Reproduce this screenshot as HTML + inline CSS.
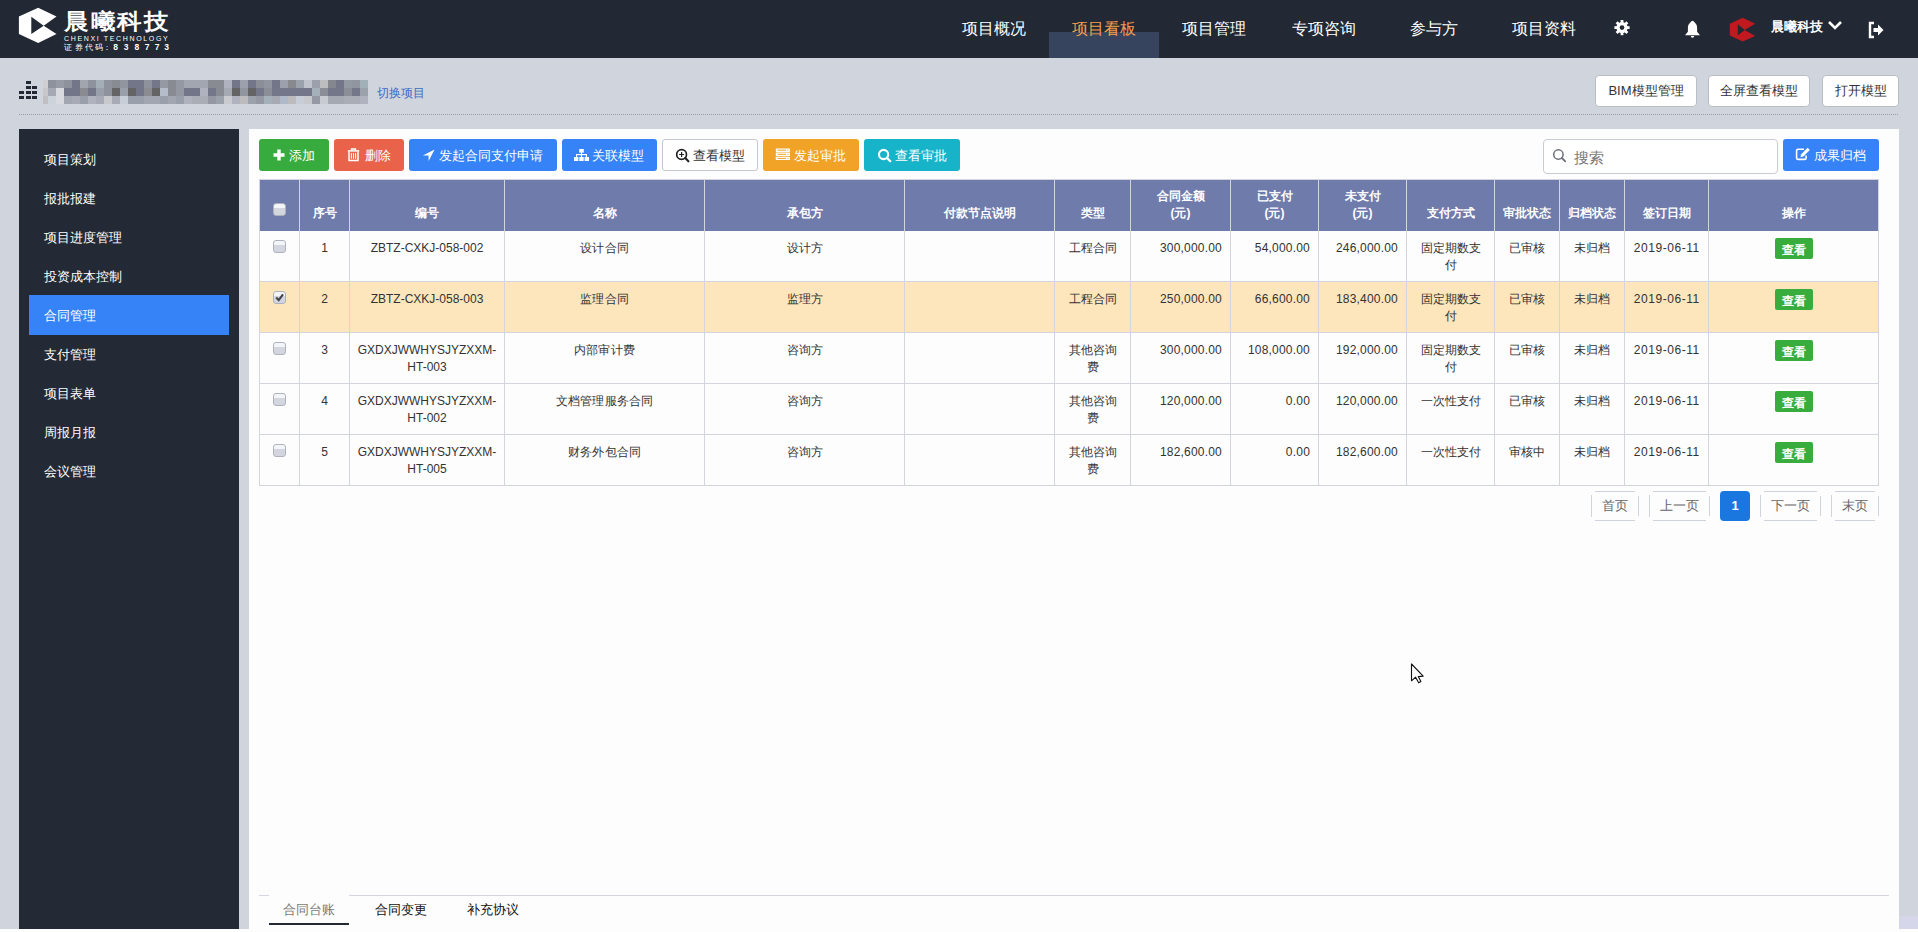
<!DOCTYPE html>
<html><head><meta charset="utf-8">
<style>
*{margin:0;padding:0;box-sizing:border-box}
html,body{width:1918px;height:932px;overflow:hidden;background:#fdfdfd;font-family:"Liberation Sans",sans-serif;color:#333}
.abs{position:absolute}
#hdr{left:0;top:0;width:1918px;height:58px;background:#222834}
#bg{left:0;top:58px;width:1918px;height:871px;background:#d0d4dd}
.nav{top:20px;height:18px;line-height:18px;font-size:16px;color:#fff;white-space:nowrap}
#side{left:19px;top:129px;width:220px;height:800px;background:#232a35}
.mi{left:25px;width:200px;height:20px;line-height:20px;font-size:13px;color:#fff;white-space:nowrap}
#panel{left:249px;top:129px;width:1650px;height:800px;background:#fdfdfd}
.btn{position:absolute;top:139px;height:32px;border-radius:3px;color:#fff;font-size:13px;line-height:32px;text-align:center;white-space:nowrap}
.tbtn{position:absolute;top:75px;height:32px;border-radius:4px;background:#fff;border:1px solid #b9bdc5;font-size:13px;line-height:30px;text-align:center;color:#333;white-space:nowrap}
.vl{position:absolute;width:1px;background:#d2d5de}
.hl{position:absolute;height:1px;background:#d2d5de}
.cell{position:absolute;font-size:12px;line-height:17px;text-align:center;color:#333}
.hc{position:absolute;font-size:12px;line-height:17px;text-align:center;color:#fff;font-weight:bold}
.cb{position:absolute;width:13px;height:13px;border:1px solid #aeb2bc;border-radius:3px;background:linear-gradient(#f4f5f8 0,#f4f5f8 35%,#d3d6de 36%,#d3d6de 100%)}
.view{position:absolute;left:1775px;width:38px;height:21px;background:#38ad3e;border-radius:2px;color:#fff;font-size:12px;line-height:24px;text-align:center;font-weight:bold}
.bt{top:148px;font-size:13px;line-height:16px;color:#fff;white-space:nowrap}
.pg{position:absolute;top:491px;height:30px;border:1px solid #d5d8df;border-radius:4px;font-size:13px;line-height:28px;text-align:center;color:#666;background:#fdfdfd}
</style></head><body>
<div id="hdr" class="abs"></div>
<div id="bg" class="abs"></div>

<!-- logo -->
<svg class="abs" style="left:0;top:0" width="180" height="58" viewBox="0 0 180 58">
  <path d="M38.2 7.8 L56.5 16.4 L43.7 25.7 L56.5 34.1 L38.2 43 L18.9 34.1 L18.9 16.4 Z M31.3 16.8 L31.3 34.1 L43.7 25.7 Z" fill="#fff" fill-rule="evenodd"/>
</svg>
<div class="abs" style="left:64px;top:9.5px;font-size:24px;line-height:26px;color:#fff;letter-spacing:2.5px;white-space:nowrap;transform:scaleY(0.9);transform-origin:0 0;font-weight:bold">晨曦科技</div>
<div class="abs" style="left:64px;top:35px;font-size:7px;line-height:7px;color:#fff;letter-spacing:1.65px;white-space:nowrap">CHENXI TECHNOLOGY</div>
<div class="abs" style="left:62.1px;top:43px;width:12px;text-align:center;font-size:7.5px;line-height:9px;color:#fff">证</div>
<div class="abs" style="left:72.7px;top:43px;width:12px;text-align:center;font-size:7.5px;line-height:9px;color:#fff">券</div>
<div class="abs" style="left:83.1px;top:43px;width:12px;text-align:center;font-size:7.5px;line-height:9px;color:#fff">代</div>
<div class="abs" style="left:93.3px;top:43px;width:12px;text-align:center;font-size:7.5px;line-height:9px;color:#fff">码</div>
<div class="abs" style="left:101.3px;top:43px;width:12px;text-align:center;font-size:7.5px;line-height:9px;color:#fff">：</div>
<div class="abs" style="left:109.5px;top:43px;width:12px;text-align:center;font-size:8.5px;line-height:9px;color:#fff;font-weight:bold">8</div>
<div class="abs" style="left:120.1px;top:43px;width:12px;text-align:center;font-size:8.5px;line-height:9px;color:#fff;font-weight:bold">3</div>
<div class="abs" style="left:130.8px;top:43px;width:12px;text-align:center;font-size:8.5px;line-height:9px;color:#fff;font-weight:bold">8</div>
<div class="abs" style="left:141.0px;top:43px;width:12px;text-align:center;font-size:8.5px;line-height:9px;color:#fff;font-weight:bold">7</div>
<div class="abs" style="left:151.2px;top:43px;width:12px;text-align:center;font-size:8.5px;line-height:9px;color:#fff;font-weight:bold">7</div>
<div class="abs" style="left:160.5px;top:43px;width:12px;text-align:center;font-size:8.5px;line-height:9px;color:#fff;font-weight:bold">3</div>
<!-- nav -->
<div class="abs" style="left:1049px;top:32px;width:110px;height:26px;background:#36445e"></div>
<div class="abs nav" style="left:962px">项目概况</div>
<div class="abs nav" style="left:1072px;color:#f39b4f">项目看板</div>
<div class="abs nav" style="left:1182px">项目管理</div>
<div class="abs nav" style="left:1292px">专项咨询</div>
<div class="abs nav" style="left:1410px">参与方</div>
<div class="abs nav" style="left:1512px">项目资料</div>

<!-- top icons -->
<svg class="abs" style="left:1612px;top:18px" width="20" height="20" viewBox="0 0 20 20"><g fill="#fff"><circle cx="10" cy="9.6" r="5.6"/><g><rect x="8.6" y="2" width="2.8" height="15.2"/><rect x="8.6" y="2" width="2.8" height="15.2" transform="rotate(45 10 9.6)"/><rect x="8.6" y="2" width="2.8" height="15.2" transform="rotate(90 10 9.6)"/><rect x="8.6" y="2" width="2.8" height="15.2" transform="rotate(135 10 9.6)"/></g></g><circle cx="10" cy="9.6" r="2.3" fill="#222834"/></svg>
<svg class="abs" style="left:1684px;top:20px" width="17" height="19" viewBox="0 0 17 19"><path d="M8.5 0.8C7.6 0.8 6.9 2 5.6 3.2C4.4 4.4 3.9 6 3.9 8L3.9 11.8L1 15.2L16 15.2L13.1 11.8L13.1 8C13.1 6 12.6 4.4 11.4 3.2C10.1 2 9.4 0.8 8.5 0.8Z" fill="#fff"/><path d="M6.8 16A1.7 1.7 0 0 0 10.2 16Z" fill="#fff"/></svg>
<svg class="abs" style="left:1728px;top:16px" width="30" height="27" viewBox="0 0 30 27"><path d="M14.7 1.8L27.2 7.7L16.6 14L27.2 20L14.7 25.6L1.8 19.5L1.8 7.7Z M9.8 8.2L9.8 19.2L16.9 14Z" fill="#c0191f" fill-rule="evenodd"/></svg>
<div class="abs" style="left:1771px;top:19px;font-size:13px;line-height:16px;color:#fff;font-weight:bold;white-space:nowrap">晨曦科技</div>
<svg class="abs" style="left:1827px;top:20px" width="16" height="11" viewBox="0 0 16 11"><path d="M2 2 L8 8 L14 2" stroke="#fff" stroke-width="2.6" fill="none"/></svg>
<svg class="abs" style="left:1867px;top:21px" width="18" height="18" viewBox="0 0 18 18"><path d="M7 2 L3 2 L3 16 L7 16" stroke="#fff" stroke-width="2.4" fill="none"/><path d="M6.5 7 L11 7 L11 3.5 L16.5 9 L11 14.5 L11 11 L6.5 11 Z" fill="#fff"/></svg>

<!-- project bar -->
<svg class="abs" style="left:19px;top:81px" width="19" height="19" viewBox="0 0 19 19">
<g fill="#222834"><rect x="7" y="0" width="5" height="3"/><rect x="7" y="5" width="5" height="3"/><rect x="13" y="5" width="5" height="3"/><rect x="0" y="10" width="5" height="3"/><rect x="7" y="10" width="5" height="3"/><rect x="13" y="10" width="5" height="3"/><rect x="0" y="15" width="5" height="3"/><rect x="7" y="15" width="5" height="3"/><rect x="13" y="15" width="5" height="3"/></g></svg>
<div class="abs" style="left:43px;top:80px;width:5px;height:8px;background:#cfcfd1"></div>
<div class="abs" style="left:48px;top:80px;width:8px;height:8px;background:#8e929d"></div>
<div class="abs" style="left:56px;top:80px;width:8px;height:8px;background:#969ba5"></div>
<div class="abs" style="left:64px;top:80px;width:8px;height:8px;background:#8e929d"></div>
<div class="abs" style="left:72px;top:80px;width:8px;height:8px;background:#727688"></div>
<div class="abs" style="left:80px;top:80px;width:8px;height:8px;background:#a0a5ae"></div>
<div class="abs" style="left:88px;top:80px;width:8px;height:8px;background:#8e929d"></div>
<div class="abs" style="left:96px;top:80px;width:8px;height:8px;background:#a4aeb7"></div>
<div class="abs" style="left:104px;top:80px;width:8px;height:8px;background:#8e929d"></div>
<div class="abs" style="left:112px;top:80px;width:8px;height:8px;background:#898b93"></div>
<div class="abs" style="left:120px;top:80px;width:8px;height:8px;background:#9095a0"></div>
<div class="abs" style="left:128px;top:80px;width:8px;height:8px;background:#727688"></div>
<div class="abs" style="left:136px;top:80px;width:8px;height:8px;background:#727688"></div>
<div class="abs" style="left:144px;top:80px;width:8px;height:8px;background:#8e929d"></div>
<div class="abs" style="left:152px;top:80px;width:8px;height:8px;background:#737789"></div>
<div class="abs" style="left:160px;top:80px;width:8px;height:8px;background:#9599a3"></div>
<div class="abs" style="left:168px;top:80px;width:8px;height:8px;background:#898b93"></div>
<div class="abs" style="left:176px;top:80px;width:8px;height:8px;background:#9398a2"></div>
<div class="abs" style="left:184px;top:80px;width:8px;height:8px;background:#a2a6b0"></div>
<div class="abs" style="left:192px;top:80px;width:8px;height:8px;background:#a2a6b0"></div>
<div class="abs" style="left:200px;top:80px;width:8px;height:8px;background:#a2a6b0"></div>
<div class="abs" style="left:208px;top:80px;width:8px;height:8px;background:#898b93"></div>
<div class="abs" style="left:216px;top:80px;width:8px;height:8px;background:#898b93"></div>
<div class="abs" style="left:224px;top:80px;width:8px;height:8px;background:#b0b3bf"></div>
<div class="abs" style="left:232px;top:80px;width:8px;height:8px;background:#727688"></div>
<div class="abs" style="left:240px;top:80px;width:8px;height:8px;background:#9ca0ac"></div>
<div class="abs" style="left:248px;top:80px;width:8px;height:8px;background:#727688"></div>
<div class="abs" style="left:256px;top:80px;width:8px;height:8px;background:#8b8e96"></div>
<div class="abs" style="left:264px;top:80px;width:8px;height:8px;background:#9095a0"></div>
<div class="abs" style="left:272px;top:80px;width:8px;height:8px;background:#727688"></div>
<div class="abs" style="left:280px;top:80px;width:8px;height:8px;background:#9ca0ac"></div>
<div class="abs" style="left:288px;top:80px;width:8px;height:8px;background:#88898f"></div>
<div class="abs" style="left:296px;top:80px;width:8px;height:8px;background:#9ca2ac"></div>
<div class="abs" style="left:304px;top:80px;width:8px;height:8px;background:#c0c3cb"></div>
<div class="abs" style="left:312px;top:80px;width:8px;height:8px;background:#9ca0ac"></div>
<div class="abs" style="left:320px;top:80px;width:8px;height:8px;background:#bdbdbf"></div>
<div class="abs" style="left:328px;top:80px;width:8px;height:8px;background:#85878e"></div>
<div class="abs" style="left:336px;top:80px;width:8px;height:8px;background:#727688"></div>
<div class="abs" style="left:344px;top:80px;width:8px;height:8px;background:#9399a3"></div>
<div class="abs" style="left:352px;top:80px;width:8px;height:8px;background:#9095a0"></div>
<div class="abs" style="left:360px;top:80px;width:8px;height:8px;background:#a2b0b8"></div>
<div class="abs" style="left:43px;top:88px;width:5px;height:8px;background:#c8c8ca"></div>
<div class="abs" style="left:48px;top:88px;width:8px;height:8px;background:#a5a9b3"></div>
<div class="abs" style="left:56px;top:88px;width:8px;height:8px;background:#d8dae0"></div>
<div class="abs" style="left:64px;top:88px;width:8px;height:8px;background:#727688"></div>
<div class="abs" style="left:72px;top:88px;width:8px;height:8px;background:#727688"></div>
<div class="abs" style="left:80px;top:88px;width:8px;height:8px;background:#898b91"></div>
<div class="abs" style="left:88px;top:88px;width:8px;height:8px;background:#727688"></div>
<div class="abs" style="left:96px;top:88px;width:8px;height:8px;background:#9aa0ab"></div>
<div class="abs" style="left:104px;top:88px;width:8px;height:8px;background:#8e929d"></div>
<div class="abs" style="left:112px;top:88px;width:8px;height:8px;background:#646464"></div>
<div class="abs" style="left:120px;top:88px;width:8px;height:8px;background:#9aa0ab"></div>
<div class="abs" style="left:128px;top:88px;width:8px;height:8px;background:#646464"></div>
<div class="abs" style="left:136px;top:88px;width:8px;height:8px;background:#727688"></div>
<div class="abs" style="left:144px;top:88px;width:8px;height:8px;background:#8b8c92"></div>
<div class="abs" style="left:152px;top:88px;width:8px;height:8px;background:#646464"></div>
<div class="abs" style="left:160px;top:88px;width:8px;height:8px;background:#b4bdc9"></div>
<div class="abs" style="left:168px;top:88px;width:8px;height:8px;background:#898b93"></div>
<div class="abs" style="left:176px;top:88px;width:8px;height:8px;background:#9398a2"></div>
<div class="abs" style="left:184px;top:88px;width:8px;height:8px;background:#727688"></div>
<div class="abs" style="left:192px;top:88px;width:8px;height:8px;background:#727688"></div>
<div class="abs" style="left:200px;top:88px;width:8px;height:8px;background:#b0b3bf"></div>
<div class="abs" style="left:208px;top:88px;width:8px;height:8px;background:#737789"></div>
<div class="abs" style="left:216px;top:88px;width:8px;height:8px;background:#898b93"></div>
<div class="abs" style="left:224px;top:88px;width:8px;height:8px;background:#a4a9b2"></div>
<div class="abs" style="left:232px;top:88px;width:8px;height:8px;background:#646464"></div>
<div class="abs" style="left:240px;top:88px;width:8px;height:8px;background:#9095a0"></div>
<div class="abs" style="left:248px;top:88px;width:8px;height:8px;background:#646464"></div>
<div class="abs" style="left:256px;top:88px;width:8px;height:8px;background:#737789"></div>
<div class="abs" style="left:264px;top:88px;width:8px;height:8px;background:#8b8e96"></div>
<div class="abs" style="left:272px;top:88px;width:8px;height:8px;background:#737789"></div>
<div class="abs" style="left:280px;top:88px;width:8px;height:8px;background:#737789"></div>
<div class="abs" style="left:288px;top:88px;width:8px;height:8px;background:#737789"></div>
<div class="abs" style="left:296px;top:88px;width:8px;height:8px;background:#737789"></div>
<div class="abs" style="left:304px;top:88px;width:8px;height:8px;background:#737789"></div>
<div class="abs" style="left:312px;top:88px;width:8px;height:8px;background:#a4b0ba"></div>
<div class="abs" style="left:320px;top:88px;width:8px;height:8px;background:#8b8e96"></div>
<div class="abs" style="left:328px;top:88px;width:8px;height:8px;background:#737789"></div>
<div class="abs" style="left:336px;top:88px;width:8px;height:8px;background:#737789"></div>
<div class="abs" style="left:344px;top:88px;width:8px;height:8px;background:#8b8e96"></div>
<div class="abs" style="left:352px;top:88px;width:8px;height:8px;background:#737789"></div>
<div class="abs" style="left:360px;top:88px;width:8px;height:8px;background:#9ca2ac"></div>
<div class="abs" style="left:43px;top:96px;width:5px;height:8px;background:#c0c0c2"></div>
<div class="abs" style="left:48px;top:96px;width:8px;height:8px;background:#ccd3db"></div>
<div class="abs" style="left:56px;top:96px;width:8px;height:8px;background:#d8dae0"></div>
<div class="abs" style="left:64px;top:96px;width:8px;height:8px;background:#a2a6b0"></div>
<div class="abs" style="left:72px;top:96px;width:8px;height:8px;background:#a8abb5"></div>
<div class="abs" style="left:80px;top:96px;width:8px;height:8px;background:#9aa0ab"></div>
<div class="abs" style="left:88px;top:96px;width:8px;height:8px;background:#b0b3bd"></div>
<div class="abs" style="left:96px;top:96px;width:8px;height:8px;background:#a8abb5"></div>
<div class="abs" style="left:104px;top:96px;width:8px;height:8px;background:#c8c9cc"></div>
<div class="abs" style="left:112px;top:96px;width:8px;height:8px;background:#a8abb5"></div>
<div class="abs" style="left:120px;top:96px;width:8px;height:8px;background:#c8ced8"></div>
<div class="abs" style="left:128px;top:96px;width:8px;height:8px;background:#9aa0ab"></div>
<div class="abs" style="left:136px;top:96px;width:8px;height:8px;background:#9aa0ab"></div>
<div class="abs" style="left:144px;top:96px;width:8px;height:8px;background:#a2a6b0"></div>
<div class="abs" style="left:152px;top:96px;width:8px;height:8px;background:#a2a6b0"></div>
<div class="abs" style="left:160px;top:96px;width:8px;height:8px;background:#9aa0ab"></div>
<div class="abs" style="left:168px;top:96px;width:8px;height:8px;background:#a2a6b0"></div>
<div class="abs" style="left:176px;top:96px;width:8px;height:8px;background:#9aa0ab"></div>
<div class="abs" style="left:184px;top:96px;width:8px;height:8px;background:#b0b3bd"></div>
<div class="abs" style="left:192px;top:96px;width:8px;height:8px;background:#aaadb6"></div>
<div class="abs" style="left:200px;top:96px;width:8px;height:8px;background:#aaadb6"></div>
<div class="abs" style="left:208px;top:96px;width:8px;height:8px;background:#9598a2"></div>
<div class="abs" style="left:216px;top:96px;width:8px;height:8px;background:#9ca2ac"></div>
<div class="abs" style="left:224px;top:96px;width:8px;height:8px;background:#c9cbd1"></div>
<div class="abs" style="left:232px;top:96px;width:8px;height:8px;background:#b0b3bf"></div>
<div class="abs" style="left:240px;top:96px;width:8px;height:8px;background:#bcbcbe"></div>
<div class="abs" style="left:248px;top:96px;width:8px;height:8px;background:#9ca2ac"></div>
<div class="abs" style="left:256px;top:96px;width:8px;height:8px;background:#9599a3"></div>
<div class="abs" style="left:264px;top:96px;width:8px;height:8px;background:#a4b0ba"></div>
<div class="abs" style="left:272px;top:96px;width:8px;height:8px;background:#a8aab3"></div>
<div class="abs" style="left:280px;top:96px;width:8px;height:8px;background:#b0b9c8"></div>
<div class="abs" style="left:288px;top:96px;width:8px;height:8px;background:#bcbcbe"></div>
<div class="abs" style="left:296px;top:96px;width:8px;height:8px;background:#c8ced8"></div>
<div class="abs" style="left:304px;top:96px;width:8px;height:8px;background:#c8c9cc"></div>
<div class="abs" style="left:312px;top:96px;width:8px;height:8px;background:#9599a3"></div>
<div class="abs" style="left:320px;top:96px;width:8px;height:8px;background:#c8cbd2"></div>
<div class="abs" style="left:328px;top:96px;width:8px;height:8px;background:#a4a9b2"></div>
<div class="abs" style="left:336px;top:96px;width:8px;height:8px;background:#a4a9b2"></div>
<div class="abs" style="left:344px;top:96px;width:8px;height:8px;background:#aaadb6"></div>
<div class="abs" style="left:352px;top:96px;width:8px;height:8px;background:#aaadb6"></div>
<div class="abs" style="left:360px;top:96px;width:8px;height:8px;background:#b0b3bf"></div>
<div class="abs" style="left:377px;top:85px;font-size:12px;line-height:16px;color:#3b6cc6;white-space:nowrap">切换项目</div>
<div class="abs" style="left:19px;top:114px;width:1880px;height:1px;background-image:linear-gradient(to right,#9a9ea8 50%,transparent 50%);background-size:2px 1px"></div>
<div class="tbtn" style="left:1595px;width:102px">BIM模型管理</div>
<div class="tbtn" style="left:1708px;width:102px">全屏查看模型</div>
<div class="tbtn" style="left:1822px;width:77px">打开模型</div>

<!-- sidebar -->
<div id="side" class="abs"></div>
<div class="abs" style="left:29px;top:295px;width:200px;height:40px;background:#3583f6"></div>
<div class="abs mi" style="left:44px;top:150px">项目策划</div>
<div class="abs mi" style="left:44px;top:189px">报批报建</div>
<div class="abs mi" style="left:44px;top:228px">项目进度管理</div>
<div class="abs mi" style="left:44px;top:267px">投资成本控制</div>
<div class="abs mi" style="left:44px;top:306px">合同管理</div>
<div class="abs mi" style="left:44px;top:345px">支付管理</div>
<div class="abs mi" style="left:44px;top:384px">项目表单</div>
<div class="abs mi" style="left:44px;top:423px">周报月报</div>
<div class="abs mi" style="left:44px;top:462px">会议管理</div>

<!-- panel -->
<div id="panel" class="abs"></div>

<div class="btn" style="left:259px;width:70px;background:#38ab3f"></div>
<div class="btn" style="left:334px;width:70px;background:#e8634a"></div>
<div class="btn" style="left:409px;width:148px;background:#3583f6"></div>
<div class="btn" style="left:562px;width:95px;background:#3583f6"></div>
<div class="btn" style="left:662px;width:96px;background:#fff;border:1px solid #c3c7cf"></div>
<div class="btn" style="left:763px;width:96px;background:#f0a326"></div>
<div class="btn" style="left:864px;width:96px;background:#17b4c9"></div>
<div class="abs" style="left:1543px;top:139px;width:235px;height:35px;border:1px solid #c8ccd4;border-radius:4px;background:#fff"></div>
<div class="btn" style="left:1783px;width:96px;background:#3583f6"></div>
<!-- icons -->
<svg class="abs" style="left:273px;top:149px" width="12" height="12" viewBox="0 0 12 12"><path d="M6 0.5V11.5M0.5 6H11.5" stroke="#fff" stroke-width="3.4"/></svg>
<svg class="abs" style="left:347px;top:148px" width="13" height="14" viewBox="0 0 13 14"><g fill="none" stroke="#fff" stroke-width="1.5"><path d="M4.6 2.2V1.1H8.4V2.2"/><path d="M0.8 2.9H12.2"/><path d="M2 3.4V12.4H11V3.4"/><path d="M4.4 5V10.8M6.5 5V10.8M8.6 5V10.8" stroke-width="1.1"/></g></svg>
<svg class="abs" style="left:422px;top:149px" width="13" height="13" viewBox="0 0 13 13"><path d="M12.6 0.6L0.9 6.4H6.6V12.1Z" fill="#fff"/></svg>
<svg class="abs" style="left:574px;top:149px" width="15" height="12" viewBox="0 0 15 12"><g fill="#fff"><rect x="5.2" y="0" width="4.6" height="3.6"/><rect x="7" y="3" width="1" height="3"/><rect x="2" y="5" width="11" height="1.2"/><rect x="2" y="5" width="1.1" height="3"/><rect x="7" y="5" width="1" height="3"/><rect x="11.9" y="5" width="1.1" height="3"/><rect x="0" y="8" width="4.4" height="4"/><rect x="5.3" y="8" width="4.4" height="4"/><rect x="10.6" y="8" width="4.4" height="4"/></g></svg>
<svg class="abs" style="left:675px;top:148px" width="15" height="15" viewBox="0 0 15 15"><circle cx="6.6" cy="6.5" r="4.9" stroke="#222" stroke-width="1.7" fill="none"/><path d="M6.6 4V9M4.1 6.5H9.1" stroke="#222" stroke-width="1.2"/><path d="M10.2 10.1L13.4 13.3" stroke="#222" stroke-width="2.1" stroke-linecap="round"/></svg>
<svg class="abs" style="left:775px;top:148px" width="16" height="13" viewBox="0 0 16 13"><g fill="#fff"><rect x="0.8" y="0.5" width="14.2" height="3.4" rx="0.6"/><rect x="0.8" y="4.6" width="14.2" height="3.4" rx="0.6"/><rect x="0.8" y="8.7" width="14.2" height="3.4" rx="0.6"/></g><g fill="#f0a326"><rect x="2.4" y="1.7" width="8.6" height="1"/><rect x="2.4" y="5.8" width="8.6" height="1"/><rect x="2.4" y="9.9" width="8.6" height="1"/><rect x="12.4" y="1.7" width="1.1" height="1"/><rect x="12.4" y="5.8" width="1.1" height="1"/><rect x="12.4" y="9.9" width="1.1" height="1"/></g></svg>
<svg class="abs" style="left:877px;top:148px" width="15" height="15" viewBox="0 0 15 15"><circle cx="6.6" cy="6.5" r="4.6" stroke="#fff" stroke-width="2.1" fill="none"/><path d="M10 10L13.3 13.3" stroke="#fff" stroke-width="2.3" stroke-linecap="round"/></svg>
<svg class="abs" style="left:1552px;top:148px" width="15" height="15" viewBox="0 0 15 15"><circle cx="6.4" cy="6.5" r="4.7" stroke="#6c707a" stroke-width="1.5" fill="none"/><path d="M9.9 10L13.2 13.3" stroke="#6c707a" stroke-width="1.8" stroke-linecap="round"/></svg>
<svg class="abs" style="left:1795px;top:147px" width="16" height="14" viewBox="0 0 16 14"><path d="M9 2.2H3.2Q1.6 2.2 1.6 3.8V10.9Q1.6 12.4 3.2 12.4H9.6Q11.1 12.4 11.1 10.9V8.4" stroke="#fff" stroke-width="1.6" fill="none"/><path d="M12.6 0.8L14.8 3L8.4 9.4L5.4 10.2L6.2 7.2Z" fill="#fff"/></svg>
<!-- texts -->
<div class="abs bt" style="left:289px">添加</div>
<div class="abs bt" style="left:365px">删除</div>
<div class="abs bt" style="left:439px">发起合同支付申请</div>
<div class="abs bt" style="left:592px">关联模型</div>
<div class="abs bt" style="left:693px;color:#333">查看模型</div>
<div class="abs bt" style="left:794px">发起审批</div>
<div class="abs bt" style="left:895px">查看审批</div>
<div class="abs bt" style="left:1814px">成果归档</div>
<div class="abs" style="left:1574px;top:149px;font-size:15px;line-height:18px;color:#777">搜索</div>

<!-- table -->
<div class="abs" style="left:259px;top:179px;width:1620px;height:52px;background:#6f7bab"></div>
<div class="abs" style="left:259px;top:281px;width:1620px;height:51px;background:#fde6bc"></div>
<div class="vl" style="left:259px;top:179px;height:307px"></div>
<div class="vl" style="left:299px;top:179px;height:307px"></div>
<div class="vl" style="left:349px;top:179px;height:307px"></div>
<div class="vl" style="left:504px;top:179px;height:307px"></div>
<div class="vl" style="left:704px;top:179px;height:307px"></div>
<div class="vl" style="left:904px;top:179px;height:307px"></div>
<div class="vl" style="left:1054px;top:179px;height:307px"></div>
<div class="vl" style="left:1130px;top:179px;height:307px"></div>
<div class="vl" style="left:1230px;top:179px;height:307px"></div>
<div class="vl" style="left:1318px;top:179px;height:307px"></div>
<div class="vl" style="left:1406px;top:179px;height:307px"></div>
<div class="vl" style="left:1494px;top:179px;height:307px"></div>
<div class="vl" style="left:1559px;top:179px;height:307px"></div>
<div class="vl" style="left:1624px;top:179px;height:307px"></div>
<div class="vl" style="left:1708px;top:179px;height:307px"></div>
<div class="vl" style="left:1878px;top:179px;height:307px"></div>
<div class="hl" style="left:259px;top:179px;width:1620px"></div>
<div class="hl" style="left:259px;top:281px;width:1620px"></div>
<div class="hl" style="left:259px;top:332px;width:1620px"></div>
<div class="hl" style="left:259px;top:383px;width:1620px"></div>
<div class="hl" style="left:259px;top:434px;width:1620px"></div>
<div class="hl" style="left:259px;top:485px;width:1620px"></div>
<div class="hc" style="left:300px;width:49px;bottom:710px">序号</div>
<div class="hc" style="left:350px;width:154px;bottom:710px">编号</div>
<div class="hc" style="left:505px;width:199px;bottom:710px">名称</div>
<div class="hc" style="left:705px;width:199px;bottom:710px">承包方</div>
<div class="hc" style="left:905px;width:149px;bottom:710px">付款节点说明</div>
<div class="hc" style="left:1055px;width:75px;bottom:710px">类型</div>
<div class="hc" style="left:1131px;width:99px;bottom:710px">合同金额<br>(元)</div>
<div class="hc" style="left:1231px;width:87px;bottom:710px">已支付<br>(元)</div>
<div class="hc" style="left:1319px;width:87px;bottom:710px">未支付<br>(元)</div>
<div class="hc" style="left:1407px;width:87px;bottom:710px">支付方式</div>
<div class="hc" style="left:1495px;width:64px;bottom:710px">审批状态</div>
<div class="hc" style="left:1560px;width:64px;bottom:710px">归档状态</div>
<div class="hc" style="left:1625px;width:83px;bottom:710px">签订日期</div>
<div class="hc" style="left:1709px;width:169px;bottom:710px">操作</div>
<div class="cell" style="left:300px;width:49px;top:240px">1</div>
<div class="cell" style="left:350px;width:154px;top:240px">ZBTZ-CXKJ-058-002</div>
<div class="cell" style="left:505px;width:199px;top:240px;letter-spacing:0.28px;text-indent:0.28px">设计合同</div>
<div class="cell" style="left:705px;width:199px;top:240px">设计方</div>
<div class="cell" style="left:905px;width:149px;top:240px"></div>
<div class="cell" style="left:1055px;width:75px;top:240px">工程合同</div>
<div class="cell" style="left:1131px;width:91px;top:240px;text-align:right;letter-spacing:0.2px;margin-right:-0.2px">300,000.00</div>
<div class="cell" style="left:1231px;width:79px;top:240px;text-align:right;letter-spacing:0.2px;margin-right:-0.2px">54,000.00</div>
<div class="cell" style="left:1319px;width:79px;top:240px;text-align:right;letter-spacing:0.2px;margin-right:-0.2px">246,000.00</div>
<div class="cell" style="left:1407px;width:87px;top:240px">固定期数支<br>付</div>
<div class="cell" style="left:1495px;width:64px;top:240px">已审核</div>
<div class="cell" style="left:1560px;width:64px;top:240px">未归档</div>
<div class="cell" style="left:1625px;width:83px;top:240px;letter-spacing:0.55px;text-indent:0.55px">2019-06-11</div>
<div class="cb" style="left:273px;top:240px"></div>
<div class="view" style="top:238px">查看</div>
<div class="cell" style="left:300px;width:49px;top:291px">2</div>
<div class="cell" style="left:350px;width:154px;top:291px">ZBTZ-CXKJ-058-003</div>
<div class="cell" style="left:505px;width:199px;top:291px;letter-spacing:0.28px;text-indent:0.28px">监理合同</div>
<div class="cell" style="left:705px;width:199px;top:291px">监理方</div>
<div class="cell" style="left:905px;width:149px;top:291px"></div>
<div class="cell" style="left:1055px;width:75px;top:291px">工程合同</div>
<div class="cell" style="left:1131px;width:91px;top:291px;text-align:right;letter-spacing:0.2px;margin-right:-0.2px">250,000.00</div>
<div class="cell" style="left:1231px;width:79px;top:291px;text-align:right;letter-spacing:0.2px;margin-right:-0.2px">66,600.00</div>
<div class="cell" style="left:1319px;width:79px;top:291px;text-align:right;letter-spacing:0.2px;margin-right:-0.2px">183,400.00</div>
<div class="cell" style="left:1407px;width:87px;top:291px">固定期数支<br>付</div>
<div class="cell" style="left:1495px;width:64px;top:291px">已审核</div>
<div class="cell" style="left:1560px;width:64px;top:291px">未归档</div>
<div class="cell" style="left:1625px;width:83px;top:291px;letter-spacing:0.55px;text-indent:0.55px">2019-06-11</div>
<div class="cb" style="left:273px;top:291px"><svg width="11" height="11" viewBox="0 0 11 11" style="position:absolute;left:0;top:0"><path d="M2.2 5.6 L4.7 8.2 L9 2.4" stroke="#444" stroke-width="2.1" fill="none"/></svg></div>
<div class="view" style="top:289px">查看</div>
<div class="cell" style="left:300px;width:49px;top:342px">3</div>
<div class="cell" style="left:350px;width:154px;top:342px">GXDXJWWHYSJYZXXM-<br>HT-003</div>
<div class="cell" style="left:505px;width:199px;top:342px;letter-spacing:0.28px;text-indent:0.28px">内部审计费</div>
<div class="cell" style="left:705px;width:199px;top:342px">咨询方</div>
<div class="cell" style="left:905px;width:149px;top:342px"></div>
<div class="cell" style="left:1055px;width:75px;top:342px">其他咨询<br>费</div>
<div class="cell" style="left:1131px;width:91px;top:342px;text-align:right;letter-spacing:0.2px;margin-right:-0.2px">300,000.00</div>
<div class="cell" style="left:1231px;width:79px;top:342px;text-align:right;letter-spacing:0.2px;margin-right:-0.2px">108,000.00</div>
<div class="cell" style="left:1319px;width:79px;top:342px;text-align:right;letter-spacing:0.2px;margin-right:-0.2px">192,000.00</div>
<div class="cell" style="left:1407px;width:87px;top:342px">固定期数支<br>付</div>
<div class="cell" style="left:1495px;width:64px;top:342px">已审核</div>
<div class="cell" style="left:1560px;width:64px;top:342px">未归档</div>
<div class="cell" style="left:1625px;width:83px;top:342px;letter-spacing:0.55px;text-indent:0.55px">2019-06-11</div>
<div class="cb" style="left:273px;top:342px"></div>
<div class="view" style="top:340px">查看</div>
<div class="cell" style="left:300px;width:49px;top:393px">4</div>
<div class="cell" style="left:350px;width:154px;top:393px">GXDXJWWHYSJYZXXM-<br>HT-002</div>
<div class="cell" style="left:505px;width:199px;top:393px;letter-spacing:0.28px;text-indent:0.28px">文档管理服务合同</div>
<div class="cell" style="left:705px;width:199px;top:393px">咨询方</div>
<div class="cell" style="left:905px;width:149px;top:393px"></div>
<div class="cell" style="left:1055px;width:75px;top:393px">其他咨询<br>费</div>
<div class="cell" style="left:1131px;width:91px;top:393px;text-align:right;letter-spacing:0.2px;margin-right:-0.2px">120,000.00</div>
<div class="cell" style="left:1231px;width:79px;top:393px;text-align:right;letter-spacing:0.2px;margin-right:-0.2px">0.00</div>
<div class="cell" style="left:1319px;width:79px;top:393px;text-align:right;letter-spacing:0.2px;margin-right:-0.2px">120,000.00</div>
<div class="cell" style="left:1407px;width:87px;top:393px">一次性支付</div>
<div class="cell" style="left:1495px;width:64px;top:393px">已审核</div>
<div class="cell" style="left:1560px;width:64px;top:393px">未归档</div>
<div class="cell" style="left:1625px;width:83px;top:393px;letter-spacing:0.55px;text-indent:0.55px">2019-06-11</div>
<div class="cb" style="left:273px;top:393px"></div>
<div class="view" style="top:391px">查看</div>
<div class="cell" style="left:300px;width:49px;top:444px">5</div>
<div class="cell" style="left:350px;width:154px;top:444px">GXDXJWWHYSJYZXXM-<br>HT-005</div>
<div class="cell" style="left:505px;width:199px;top:444px;letter-spacing:0.28px;text-indent:0.28px">财务外包合同</div>
<div class="cell" style="left:705px;width:199px;top:444px">咨询方</div>
<div class="cell" style="left:905px;width:149px;top:444px"></div>
<div class="cell" style="left:1055px;width:75px;top:444px">其他咨询<br>费</div>
<div class="cell" style="left:1131px;width:91px;top:444px;text-align:right;letter-spacing:0.2px;margin-right:-0.2px">182,600.00</div>
<div class="cell" style="left:1231px;width:79px;top:444px;text-align:right;letter-spacing:0.2px;margin-right:-0.2px">0.00</div>
<div class="cell" style="left:1319px;width:79px;top:444px;text-align:right;letter-spacing:0.2px;margin-right:-0.2px">182,600.00</div>
<div class="cell" style="left:1407px;width:87px;top:444px">一次性支付</div>
<div class="cell" style="left:1495px;width:64px;top:444px">审核中</div>
<div class="cell" style="left:1560px;width:64px;top:444px">未归档</div>
<div class="cell" style="left:1625px;width:83px;top:444px;letter-spacing:0.55px;text-indent:0.55px">2019-06-11</div>
<div class="cb" style="left:273px;top:444px"></div>
<div class="view" style="top:442px">查看</div>
<div class="cb" style="left:273px;top:203px"></div>

<!-- pagination -->
<div class="abs" style="left:1595px;top:491px;width:40px;height:1px;background:#cfd3dc"></div>
<div class="abs" style="left:1595px;top:520px;width:40px;height:1px;background:#cfd3dc"></div>
<div class="abs" style="left:1591px;top:495px;width:1px;height:22px;background:#cfd3dc"></div>
<div class="abs" style="left:1638px;top:496px;width:1px;height:20px;background:#cfd3dc"></div>
<div class="abs" style="left:1591px;top:497px;width:48px;font-size:13px;line-height:17px;text-align:center;color:#666;white-space:nowrap">首页</div>
<div class="abs" style="left:1653px;top:491px;width:53px;height:1px;background:#cfd3dc"></div>
<div class="abs" style="left:1653px;top:520px;width:53px;height:1px;background:#cfd3dc"></div>
<div class="abs" style="left:1649px;top:495px;width:1px;height:22px;background:#cfd3dc"></div>
<div class="abs" style="left:1709px;top:496px;width:1px;height:20px;background:#cfd3dc"></div>
<div class="abs" style="left:1649px;top:497px;width:61px;font-size:13px;line-height:17px;text-align:center;color:#666;white-space:nowrap">上一页</div>
<div class="abs" style="left:1764px;top:491px;width:53px;height:1px;background:#cfd3dc"></div>
<div class="abs" style="left:1764px;top:520px;width:53px;height:1px;background:#cfd3dc"></div>
<div class="abs" style="left:1760px;top:495px;width:1px;height:22px;background:#cfd3dc"></div>
<div class="abs" style="left:1820px;top:496px;width:1px;height:20px;background:#cfd3dc"></div>
<div class="abs" style="left:1760px;top:497px;width:61px;font-size:13px;line-height:17px;text-align:center;color:#666;white-space:nowrap">下一页</div>
<div class="abs" style="left:1835px;top:491px;width:40px;height:1px;background:#cfd3dc"></div>
<div class="abs" style="left:1835px;top:520px;width:40px;height:1px;background:#cfd3dc"></div>
<div class="abs" style="left:1831px;top:495px;width:1px;height:22px;background:#cfd3dc"></div>
<div class="abs" style="left:1878px;top:496px;width:1px;height:20px;background:#cfd3dc"></div>
<div class="abs" style="left:1831px;top:497px;width:48px;font-size:13px;line-height:17px;text-align:center;color:#666;white-space:nowrap">末页</div>
<div class="abs" style="left:1720px;top:491px;width:30px;height:30px;border-radius:4px;background:#1a77e0;color:#fff;font-size:13px;line-height:30px;text-align:center;font-weight:bold">1</div>
<div class="abs" style="left:1899px;top:916px;width:19px;height:13px;background:#d6d6ea"></div>
<!-- bottom tabs -->
<div class="abs" style="left:259px;top:895px;width:1630px;height:1px;background:#d3d6e0"></div>
<div class="abs" style="left:269px;top:895px;width:80px;height:30px;background:#fdfdfd;border-bottom:2px solid #222834"></div>
<div class="abs" style="left:283px;top:902px;font-size:13px;line-height:16px;color:#7a7a7a;white-space:nowrap">合同台账</div>
<div class="abs" style="left:375px;top:902px;font-size:13px;line-height:16px;color:#111;font-weight:500;white-space:nowrap">合同变更</div>
<div class="abs" style="left:467px;top:902px;font-size:13px;line-height:16px;color:#111;font-weight:500;white-space:nowrap">补充协议</div>

<svg class="abs" style="left:1410px;top:663px" width="16" height="22" viewBox="0 0 16 22"><path d="M1.5 1L1.5 17.8L5.6 14.2L8.7 19.8L10.9 18.6L8.3 13.6L13.2 13.1Z" fill="#fff" stroke="#111" stroke-width="1.1" stroke-linejoin="round"/></svg>
</body></html>
